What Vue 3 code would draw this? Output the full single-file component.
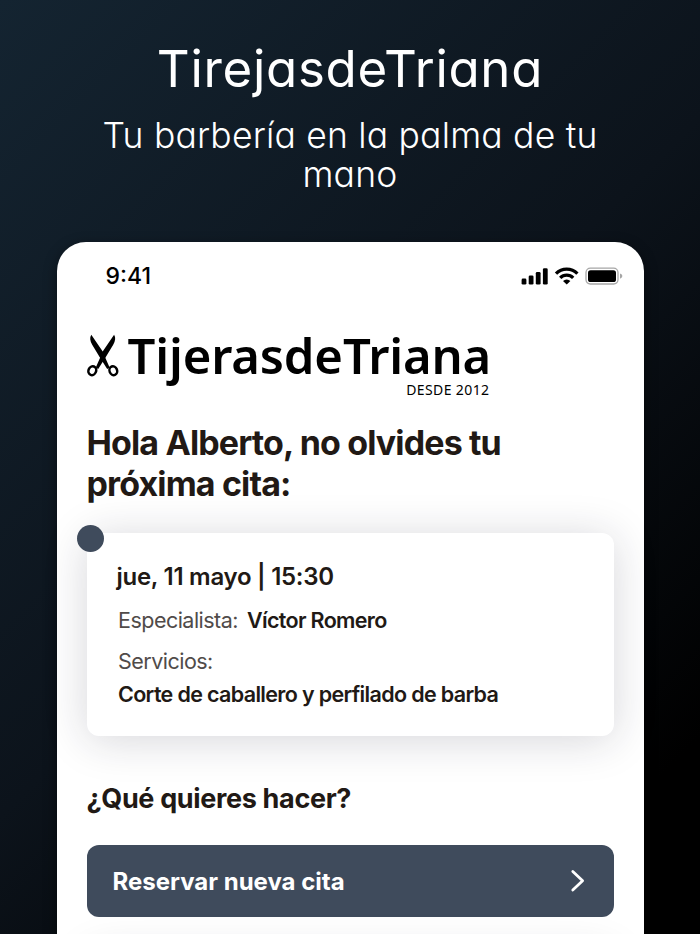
<template>
  <div class="page">
    <header class="intro">
      <h1>TirejasdeTriana</h1>
      <p><span>Tu barbería en la palma de tu</span><br>mano</p>
    </header>

    <main class="phone">
      <div class="status">
        <span class="time">9:41</span>
        <svg class="status-icons" width="102" height="20" viewBox="0 0 102 20">
          <rect v-for="bar in bars" :key="bar.x" :x="bar.x" :y="18.6 - bar.h" width="4.8" :height="bar.h" rx="1.3" />
          <g fill="none" stroke="#000" stroke-width="3.3">
            <path d="M35 7.6a15.2 15.2 0 0 1 21.4 0" />
            <path d="M39.2 11.8a9.2 9.2 0 0 1 13 0" />
          </g>
          <path d="M45.7 18.6l-3.7-3.6a5.200 5.200 0 0 1 7.400 0z" />
          <rect x="65" y="2.2" width="32" height="15.8" rx="4.4" fill="none" stroke="#a6a6a6" stroke-width="1.3" />
          <rect x="67" y="4.2" width="28" height="11.8" rx="2.6" />
          <path d="M99 7.500q2.400.8 2.400 2.600t-2.400 2.600z" fill="#a6a6a6" />
        </svg>
      </div>

      <div class="logo">
        <svg class="scissors" width="32" height="44" viewBox="0 0 32 44">
          <path d="M4.300.8C2.500 3.500 3 6.800 5.200 10.800L12.600 23L20.200 35L22.600 33.600L18.200 23.600L17.600 20.200z" />
          <path d="M27.100.8C28.900 3.500 28.400 6.800 26.200 10.800L18.800 23L11.200 35L8.800 33.600L13.200 23.600L13.800 20.200z" />
          <g fill="none" stroke="#000" stroke-width="2.5">
            <ellipse cx="5.300" cy="36.700" rx="3.800" ry="4.500" transform="rotate(22 5.300 36.700)" />
            <ellipse cx="26.300" cy="36.700" rx="3.800" ry="4.500" transform="rotate(-22 26.300 36.700)" />
          </g>
        </svg>
        <div class="brand">
          <span class="name">TijerasdeTriana</span>
          <span class="since">DESDE 2012</span>
        </div>
      </div>

      <h2>Hola Alberto, no olvides tu<br>próxima cita:</h2>

      <section class="card">
        <i class="dot"></i>
        <p class="date">jue, 11 mayo | 15:30</p>
        <p class="row"><span>Especialista:</span><b>Víctor Romero</b></p>
        <p class="row"><span>Servicios:</span></p>
        <p class="row detail"><b>Corte de caballero y perfilado de barba</b></p>
      </section>

      <h3>¿Qué quieres hacer?</h3>

      <button class="action">
        <span>Reservar nueva cita</span>
        <svg width="16" height="24" viewBox="0 0 16 24">
          <path d="M2.800 2.500l9.800 9.300L2.800 21.100" fill="none" stroke="#fff" stroke-width="2.8" stroke-linecap="round" stroke-linejoin="round" />
        </svg>
      </button>
      <div class="next"></div>
    </main>
  </div>
</template>

<script setup>
// señal de cobertura
const bars = [
  { x: 0.6, h: 6 },
  { x: 7.7, h: 9.2 },
  { x: 14.8, h: 12.6 },
  { x: 21.9, h: 16.4 }
]
</script>

<style>
body {
  overflow: hidden;
}
</style>

<style scoped>
* {
  box-sizing: border-box;
  margin: 0;
}

.page {
  display: flex;
  flex-direction: column;
  align-items: center;
  width: 700px;
  height: 934px;
  overflow: hidden;
  background: linear-gradient(135deg, #142431 0%, #0c131b 50%, #000 88%);
  font-family: Inter, "Liberation Sans", sans-serif;
}

.intro {
  flex: none;
  height: 242px;
  padding-top: 39px;
  color: #fff;
  text-align: center;
  font-feature-settings: "cv11";
}

.intro h1 {
  height: 60px;
  line-height: 60px;
  font-size: 51px;
  font-weight: 400;
  letter-spacing: 0.7px;
}

.intro p {
  margin-top: 17px;
  line-height: 39px;
  font-size: 35.5px;
  font-weight: 300;
  letter-spacing: 0.2px;
}

.phone {
  flex: none;
  width: 587px;
  height: 720px;
  padding: 0 30px;
  border-radius: 29px 29px 0 0;
  background: #fff;
  box-shadow: 0 4px 14px rgba(0, 0, 0, 0.45);
  color: #211915;
}

.status {
  display: flex;
  justify-content: space-between;
  align-items: center;
  height: 68px;
  padding-left: 19px;
  margin-right: -9px;
  color: #000;
}

.time {
  font-size: 23px;
  font-weight: 500;
}

.logo {
  display: flex;
  height: 112px;
  padding-top: 24px;
  color: #000;
}

.scissors {
  flex: none;
}

.brand {
  display: flex;
  flex-direction: column;
  width: 362px;
  margin-left: 9px;
}

.name {
  height: 48px;
  line-height: 42px;
  font-family: "Noto Sans", sans-serif;
  font-size: 49px;
  font-weight: 600;
  letter-spacing: -0.15px;
  white-space: nowrap;
}

.since {
  align-self: flex-end;
  line-height: 16px;
  font-family: "Noto Sans", sans-serif;
  font-size: 14px;
  letter-spacing: 0.4px;
}

h2 {
  height: 111px;
  line-height: 41px;
  font-size: 34px;
  font-weight: 700;
  letter-spacing: -0.87px;
  white-space: nowrap;
}

.card {
  position: relative;
  height: 203px;
  padding: 28px 30px;
  border-radius: 12px;
  background: #fff;
  box-shadow: 0 4px 44px rgba(30, 30, 50, 0.18);
}

.dot {
  position: absolute;
  top: -8px;
  left: -9.5px;
  width: 27px;
  height: 27px;
  border-radius: 50%;
  background: #3f4b5c;
}

.date {
  height: 32px;
  line-height: 32px;
  font-size: 24px;
  font-weight: 600;
  letter-spacing: -0.27px;
}

.row {
  display: flex;
  gap: 9px;
  height: 28px;
  margin-top: 13px;
  padding-left: 1.5px;
  line-height: 28px;
  font-size: 21.5px;
  letter-spacing: -0.52px;
  white-space: nowrap;
}

.row span {
  color: #504b49;
}

.row b {
  font-weight: 600;
  letter-spacing: -0.66px;
}

.detail {
  margin-top: 5px;
}

h3 {
  height: 109px;
  padding-top: 45px;
  line-height: 36px;
  font-size: 27px;
  font-weight: 700;
  letter-spacing: -0.34px;
}

.action {
  display: flex;
  align-items: center;
  justify-content: space-between;
  width: 100%;
  height: 72px;
  padding: 0 28px 0 26px;
  border: 0;
  border-radius: 12px;
  background: #3f4b5c;
  color: #fff;
  font-family: inherit;
  font-size: 24px;
  font-weight: 700;
}

.next {
  height: 60px;
  margin-top: 33px;
  border-radius: 12px;
  box-shadow: 0 4px 44px rgba(30, 30, 50, 0.14);
}
</style>
